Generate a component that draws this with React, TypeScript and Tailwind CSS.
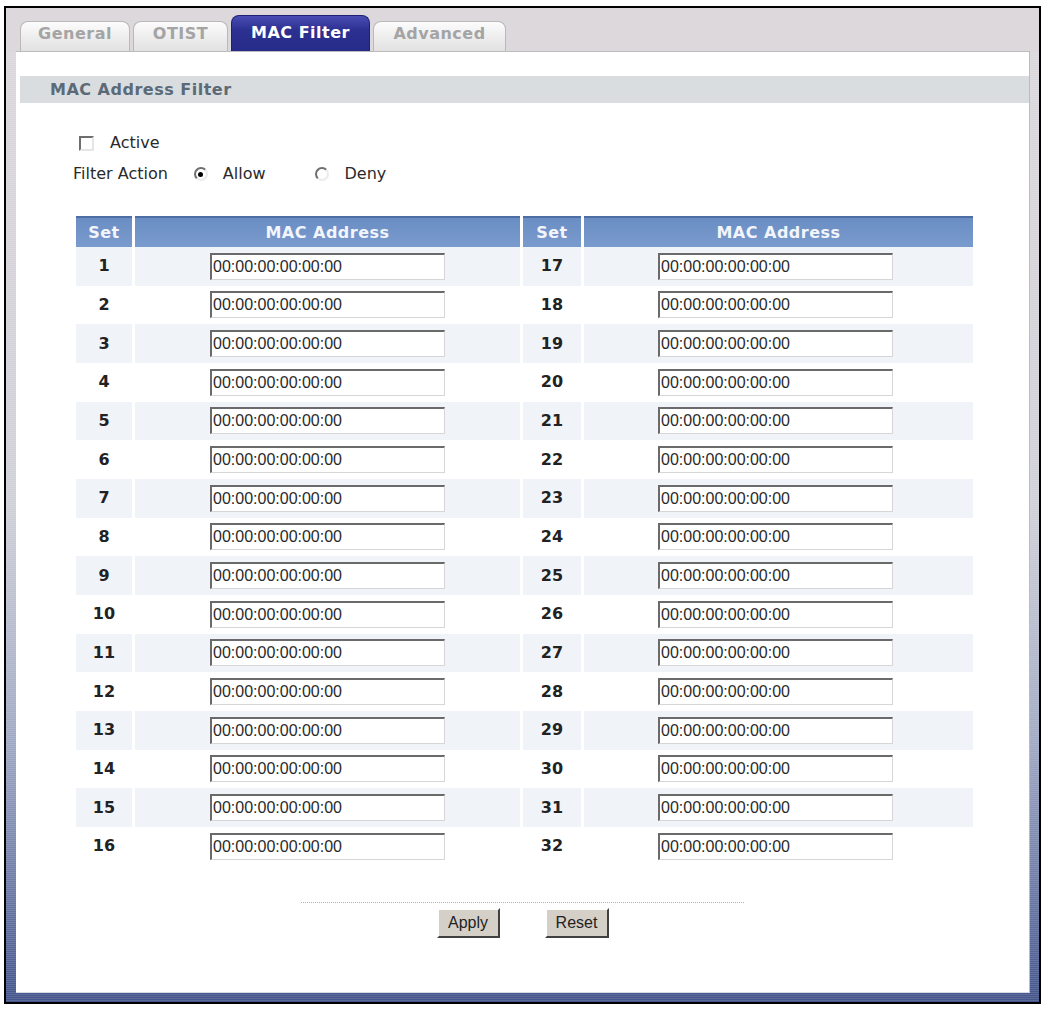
import React, { useState } from 'react';

const tabs = [
  { label: 'General', className: 'w-[110px]' },
  { label: 'OTIST', className: 'w-[95px]' },
  { label: 'MAC Filter', className: 'w-[139px]', active: true },
  { label: 'Advanced', className: 'w-[133px]' },
];

const EMPTY_MAC = '00:00:00:00:00:00';

function MacInput({ value, onChange, offset }: { value: string; onChange: (v: string) => void; offset: string }) {
  return (
    <div className={`h-full flex items-center ${offset}`}>
      <input
        value={value}
        onChange={(e) => onChange(e.target.value)}
        className="w-[235px] h-[27px] bg-white pl-[1px] text-[16px] text-[#2a2a2a] font-['Liberation_Sans',Arial,sans-serif] border-t-2 border-l-2 border-b border-r border-t-[#6a6a6a] border-l-[#6a6a6a] border-b-[#d6d6d6] border-r-[#d6d6d6] outline-none"
      />
    </div>
  );
}

function Radio({ checked, onClick }: { checked: boolean; onClick: () => void }) {
  return (
    <span
      onClick={onClick}
      className="w-[14px] h-[14px] rounded-full bg-white border-2 border-t-[#6e6e6e] border-l-[#6e6e6e] border-b-[#ececec] border-r-[#ececec] flex items-center justify-center cursor-pointer"
    >
      {checked && <span className="w-[5px] h-[5px] rounded-full bg-black" />}
    </span>
  );
}

export default function App() {
  const [active, setActive] = useState(false);
  const [action, setAction] = useState<'allow' | 'deny'>('allow');
  const [macs, setMacs] = useState<string[]>(Array.from({ length: 32 }, () => EMPTY_MAC));

  const setMac = (i: number, v: string) => {
    setMacs((prev) => prev.map((m, j) => (j === i ? v : m)));
  };

  return (
    <div className="w-[1045px] h-[1010px] bg-white pt-[6px] pl-[4px] font-['DejaVu_Sans',Verdana,sans-serif]">
      <div className="w-[1037px] h-[998px] border-2 border-black flex flex-col pl-[10px] pr-[9px] pb-[9px] bg-[repeating-linear-gradient(to_bottom,rgba(255,255,255,0.12)_0px,rgba(255,255,255,0.12)_1px,transparent_1px,transparent_2px),linear-gradient(to_bottom,#dcd8dc_0%,#d0d0d8_50%,#a0a9c4_74%,#44558c_100%)]">
        {/* tab strip */}
        <div className="h-[43px] flex items-end gap-[3px] bg-[#dcd8dc] -ml-[10px] -mr-[9px] pl-[14px]">
          {tabs.map((t) =>
            t.active ? (
              <div
                key={t.label}
                className={`${t.className} h-[36px] rounded-t-[8px] border border-b-0 border-[#1e2174] bg-[linear-gradient(to_bottom,#4a4eb4,#2c3090_40%,#262a88)] text-white font-bold text-[16px] leading-[24px] tracking-[0.5px] flex items-start justify-center pt-[5px]`}
              >
                {t.label}
              </div>
            ) : (
              <div
                key={t.label}
                className={`${t.className} h-[30px] rounded-t-[8px] border border-b-0 border-[#b9b9b9] bg-[linear-gradient(to_bottom,#fcfcfc,#eeeeee_50%,#e2e2e2)] text-[#a4a4a4] font-bold text-[16px] leading-[24px] tracking-[0.5px] flex items-start justify-center pt-0`}
              >
                {t.label}
              </div>
            )
          )}
        </div>

        {/* white panel */}
        <div className="flex-1 bg-white border-t border-r border-b border-t-[#bcbcbc] border-r-[#bcbcbc] border-b-[#d8dbe4] flex flex-col">
          <div className="ml-[4px] mt-[24px] h-[27px] bg-[#d9dde0] flex items-center pl-[30px] text-[16px] font-bold tracking-[0.5px] text-[#5b6a76]">
            MAC Address Filter
          </div>

          <div className="pl-[57px] text-[16px] text-[#2a2a2a]">
            <div className="mt-[30px] h-[20px] flex items-center pl-[6px]">
              <span
                onClick={() => setActive(!active)}
                className="w-[15px] h-[15px] bg-white border-2 border-t-[#6e6e6e] border-l-[#6e6e6e] border-b-[#e6e6e6] border-r-[#e6e6e6] flex items-center justify-center text-[11px] leading-none cursor-pointer"
              >
                {active ? '✓' : ''}
              </span>
              <span className="ml-[16px]">Active</span>
            </div>

            <div className="mt-[11px] h-[20px] flex items-center">
              <span>Filter Action</span>
              <span className="ml-[26px]">
                <Radio checked={action === 'allow'} onClick={() => setAction('allow')} />
              </span>
              <span className="ml-[15px]">Allow</span>
              <span className="ml-[49px]">
                <Radio checked={action === 'deny'} onClick={() => setAction('deny')} />
              </span>
              <span className="ml-[16px]">Deny</span>
            </div>
          </div>

          {/* address table */}
          <div className="ml-[60px] mt-[32px] grid grid-cols-[56px_385px_58px_389px] gap-x-[3px]">
            <div className="h-[31px] border-t-2 border-[#4d6da3] bg-[linear-gradient(to_bottom,#6a8dc4,#7a9bcd)] flex items-center justify-center text-[16px] font-bold tracking-[0.5px] text-[#f2f5fb]">
              Set
            </div>
            <div className="h-[31px] border-t-2 border-[#4d6da3] bg-[linear-gradient(to_bottom,#6a8dc4,#7a9bcd)] flex items-center justify-center text-[16px] font-bold tracking-[0.5px] text-[#f2f5fb]">
              MAC Address
            </div>
            <div className="h-[31px] border-t-2 border-[#4d6da3] bg-[linear-gradient(to_bottom,#6a8dc4,#7a9bcd)] flex items-center justify-center text-[16px] font-bold tracking-[0.5px] text-[#f2f5fb]">
              Set
            </div>
            <div className="h-[31px] border-t-2 border-[#4d6da3] bg-[linear-gradient(to_bottom,#6a8dc4,#7a9bcd)] flex items-center justify-center text-[16px] font-bold tracking-[0.5px] text-[#f2f5fb]">
              MAC Address
            </div>

            {Array.from({ length: 16 }, (_, i) => {
              const shade = i % 2 === 0 ? 'bg-[#f0f3f8]' : 'bg-white';
              return (
                <React.Fragment key={i}>
                  <div className={`h-[38.67px] ${shade} flex items-center justify-center text-[16px] font-bold text-[#222]`}>
                    {i + 1}
                  </div>
                  <div className={`h-[38.67px] ${shade}`}>
                    <MacInput value={macs[i]} onChange={(v) => setMac(i, v)} offset="pl-[75px]" />
                  </div>
                  <div className={`h-[38.67px] ${shade} flex items-center justify-center text-[16px] font-bold text-[#222]`}>
                    {i + 17}
                  </div>
                  <div className={`h-[38.67px] ${shade}`}>
                    <MacInput value={macs[i + 16]} onChange={(v) => setMac(i + 16, v)} offset="pl-[74px]" />
                  </div>
                </React.Fragment>
              );
            })}
          </div>

          {/* form buttons */}
          <div className="mt-[36px] flex flex-col items-center">
            <div className="w-[443px] border-t border-dotted border-[#b4b4b4]" />
            <div className="mt-[5px] flex gap-[45px] font-['Liberation_Sans',Arial,sans-serif] text-[16px] text-[#222]">
              <button className="w-[63px] h-[30px] bg-[#d4d0c8] border-2 border-t-white border-l-white border-b-[#404040] border-r-[#404040]">
                Apply
              </button>
              <button className="w-[64px] h-[30px] bg-[#d4d0c8] border-2 border-t-white border-l-white border-b-[#404040] border-r-[#404040]">
                Reset
              </button>
            </div>
          </div>
        </div>
      </div>
    </div>
  );
}
